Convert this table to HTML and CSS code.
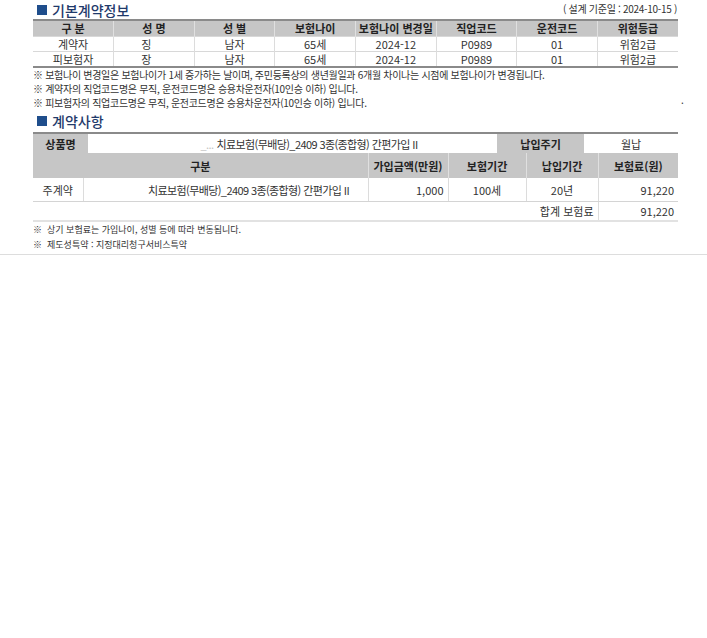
FILE: index.html
```html
<!DOCTYPE html>
<html lang="ko">
<head>
<meta charset="utf-8">
<link rel="stylesheet" href="styles.css">
</head>
<body>
<div class="page">
  <div class="title-row">
    <h2 class="sec-title"><span class="sq"></span>기본계약정보</h2>
    <span class="base-date">( 설계 기준일 : 2024-10-15 )</span>
  </div>
  <table class="t1">
    <thead>
      <tr><th>구 분</th><th>성 명</th><th>성 별</th><th>보험나이</th><th>보험나이 변경일</th><th>직업코드</th><th>운전코드</th><th>위험등급</th></tr>
    </thead>
    <tbody>
      <tr><td>계약자</td><td class="nm">징</td><td>남자</td><td>65세</td><td>2024-12</td><td>P0989</td><td>01</td><td>위험2급</td></tr>
      <tr><td>피보험자</td><td class="nm">장</td><td>남자</td><td>65세</td><td>2024-12</td><td>P0989</td><td>01</td><td>위험2급</td></tr>
    </tbody>
  </table>
  <div class="notes">
    <p>※ 보험나이 변경일은 보험나이가 1세 증가하는 날이며, 주민등록상의 생년월일과 6개월 차이나는 시점에 보험나이가 변경됩니다.</p>
    <p>※ 계약자의 직업코드명은 무직, 운전코드명은 승용차운전자(10인승 이하) 입니다.</p>
    <p class="with-dot">※ 피보험자의 직업코드명은 무직, 운전코드명은 승용차운전자(10인승 이하) 입니다.<span class="dot">.</span></p>
  </div>
  <div class="title-row t2-title">
    <h2 class="sec-title"><span class="sq"></span>계약사항</h2>
  </div>
  <table class="t2">
    <colgroup>
      <col class="w50"><col class="w5"><col class="w280"><col class="w80"><col class="w49"><col class="w29"><col class="w58"><col class="w14"><col class="w80">
    </colgroup>
    <tbody>
      <tr class="r-prod">
        <th colspan="2">상품명</th>
        <td colspan="3" class="prod"><span class="mask">_...</span>치료보험(무배당)_2409 3종(종합형) 간편가입 II</td>
        <th colspan="2">납입주기</th>
        <td colspan="2">월납</td>
      </tr>
      <tr class="r-head">
        <th colspan="3">구분</th><th>가입금액(만원)</th><th colspan="2">보험기간</th><th colspan="2">납입기간</th><th>보험료(원)</th>
      </tr>
      <tr class="r-main">
        <td>주계약</td>
        <td colspan="2" class="prod2">치료보험(무배당)_2409 3종(종합형) 간편가입 II</td>
        <td class="num">1,000</td><td colspan="2">100세</td><td colspan="2">20년</td><td class="num">91,220</td>
      </tr>
      <tr class="r-sum">
        <td colspan="8" class="sum-label">합계 보험료</td>
        <td class="num sum-val">91,220</td>
      </tr>
    </tbody>
  </table>
  <div class="notes2">
    <p>※&nbsp; 상기 보험료는 가입나이, 성별 등에 따라 변동됩니다.</p>
    <p>※&nbsp; 제도성특약 : 지정대리청구서비스특약</p>
  </div>
</div>
<div class="rule"></div>
</body>
</html>
```
FILE: styles.css
```css
html, body {
  margin: 0;
  padding: 0;
  background: #fff;
}
body {
  font-family: "Noto Sans CJK KR", "Noto Sans", sans-serif;
  color: #222;
}
.page {
  width: 645px;
  margin-left: 33px;
}
.title-row {
  width: 645px;
  display: flex;
  align-items: flex-end;
  height: 19px;
}
.sec-title {
  margin: 0;
  font-size: 14px;
  font-weight: 500;
  color: #1f3a6b;
  line-height: 18px;
  display: flex;
  align-items: center;
  gap: 5px;
  padding-left: 4px;
}
.sq {
  display: inline-block;
  width: 10px;
  height: 10px;
  background: #1f4e8c;
}
.base-date {
  margin-left: auto;
  white-space: nowrap;
  font-size: 10px;
  letter-spacing: -0.3px;
  color: #333;
  line-height: 14px;
  padding-bottom: 3px;
  padding-right: 1px;
}
table {
  border-collapse: collapse;
  width: 645px;
  table-layout: fixed;
}
.t1 {
  border-top: 2px solid #8a8a8a;
  border-bottom: 2px solid #8a8a8a;
}
.t1 th {
  background: #c6c6c6;
  font-size: 11px;
  font-weight: 700;
  height: 15px;
  padding: 0;
  line-height: 15px;
  border-left: 1px solid #e0e0e0;
}
.t1 td {
  font-size: 11px;
  text-align: center;
  height: 14px;
  padding: 0;
  line-height: 14px;
  border-left: 1px solid #dcdcdc;
  border-top: 1px solid #d8d8d8;
  color: #333;
}
.t1 th:first-child, .t1 td:first-child { border-left: none; }
.t1 td.nm { text-align: left; padding-left: 27px; }
.notes {
  font-size: 10px;
  color: #333;
  letter-spacing: -0.3px;
}
.notes p {
  margin: 0;
  line-height: 14px;
  white-space: nowrap;
}
.with-dot { position: relative; }
.dot {
  position: absolute;
  left: 648px;
  top: -3px;
}
.t2-title {
  height: 22px;
  align-items: center;
}
.t2 {
  border-top: 2px solid #8a8a8a;
}
.w50 { width: 50px; }
.w5 { width: 5px; }
.w280 { width: 280px; }
.w80 { width: 80px; }
.w49 { width: 49px; }
.w29 { width: 29px; }
.w58 { width: 58px; }
.w14 { width: 14px; }
.t2 th, .t2 td {
  font-size: 11px;
  padding: 0;
  text-align: center;
  line-height: 14px;
}
.t2 th {
  background: #c6c6c6;
  font-weight: 700;
  color: #222;
}
.t2 td { color: #333; }
.r-prod th, .r-prod td { height: 19px; }
.r-head th {
  height: 25px;
  border-left: 1px solid #e0e0e0;
}
.r-head th:first-child { border-left: none; }
.r-main td {
  height: 23px;
  border-left: 1px solid #dcdcdc;
  border-bottom: 1px solid #d4d4d4;
}
.r-main td:first-child { border-left: none; }
.r-sum td {
  height: 18px;
  border-bottom: 2px solid #e2e2e2;
}
.sum-val { border-left: 1px solid #dcdcdc; }
.num { text-align: right !important; padding-right: 4px !important; }
.sum-label { text-align: right !important; padding-right: 4px !important; }
.prod, .prod2 { letter-spacing: -0.6px; }
.prod { padding-left: 33px !important; }
.prod2 { padding-left: 46px !important; }
.mask { color: #c4c4c4; margin-right: 3px; }
.notes2 {
  font-size: 9px;
  color: #333;
}
.notes2 p {
  margin: 0;
  line-height: 15px;
}
.rule {
  margin-top: 2px;
  border-top: 1px solid #ddd;
  width: 707px;
}
```
